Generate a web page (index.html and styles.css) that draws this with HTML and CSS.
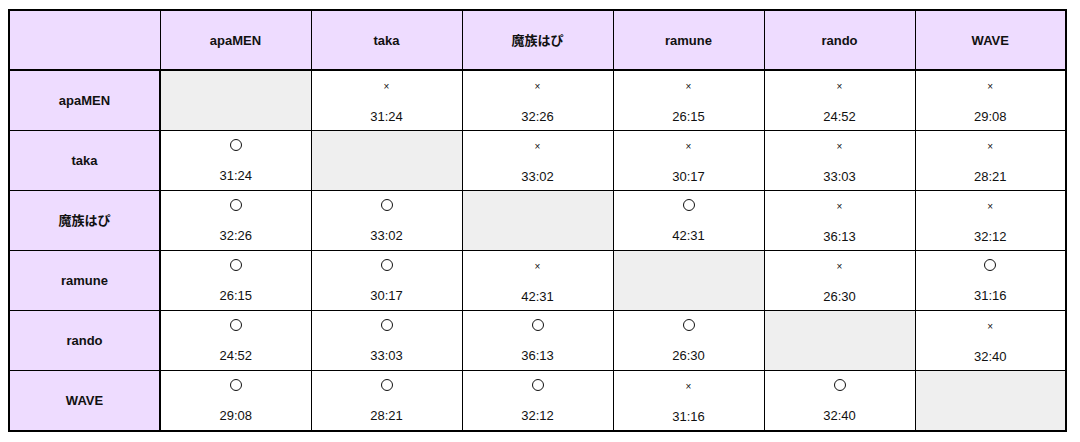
FILE: index.html
```html
<!DOCTYPE html>
<html lang="ja">
<head>
<meta charset="utf-8">
<link rel="stylesheet" href="styles.css">
</head>
<body>
<table class="league">
  <colgroup><col class="c-name"><col><col><col><col><col><col></colgroup>
  <thead>
    <tr><th class="corner"></th><th>apaMEN</th><th>taka</th><th>魔族はぴ</th><th>ramune</th><th>rando</th><th>WAVE</th></tr>
  </thead>
  <tbody>
    <tr><th>apaMEN</th><td class="self"></td><td><span class="x">×</span><br><br>31:24</td><td><span class="x">×</span><br><br>32:26</td><td><span class="x">×</span><br><br>26:15</td><td><span class="x">×</span><br><br>24:52</td><td><span class="x">×</span><br><br>29:08</td></tr>
    <tr><th>taka</th><td><span class="o"></span><br><br>31:24</td><td class="self"></td><td><span class="x">×</span><br><br>33:02</td><td><span class="x">×</span><br><br>30:17</td><td><span class="x">×</span><br><br>33:03</td><td><span class="x">×</span><br><br>28:21</td></tr>
    <tr><th>魔族はぴ</th><td><span class="o"></span><br><br>32:26</td><td><span class="o"></span><br><br>33:02</td><td class="self"></td><td><span class="o"></span><br><br>42:31</td><td><span class="x">×</span><br><br>36:13</td><td><span class="x">×</span><br><br>32:12</td></tr>
    <tr><th>ramune</th><td><span class="o"></span><br><br>26:15</td><td><span class="o"></span><br><br>30:17</td><td><span class="x">×</span><br><br>42:31</td><td class="self"></td><td><span class="x">×</span><br><br>26:30</td><td><span class="o"></span><br><br>31:16</td></tr>
    <tr><th>rando</th><td><span class="o"></span><br><br>24:52</td><td><span class="o"></span><br><br>33:03</td><td><span class="o"></span><br><br>36:13</td><td><span class="o"></span><br><br>26:30</td><td class="self"></td><td><span class="x">×</span><br><br>32:40</td></tr>
    <tr><th>WAVE</th><td><span class="o"></span><br><br>29:08</td><td><span class="o"></span><br><br>28:21</td><td><span class="o"></span><br><br>32:12</td><td><span class="x">×</span><br><br>31:16</td><td><span class="o"></span><br><br>32:40</td><td class="self"></td></tr>
  </tbody>
</table>
</body>
</html>
```
FILE: styles.css
```css
html, body { background: #fff; }
body {
  margin: 9px 0 0 8px;
  font-family: "Liberation Sans", Arial, "Noto Sans CJK JP", sans-serif;
  font-size: 13px;
  color: #111;
}
.league {
  border-collapse: collapse;
  table-layout: fixed;
  width: 1058px;
  border: 2px solid #000;
}
.league col { width: 151px; }
.league th, .league td {
  border: 1px solid #000;
  text-align: center;
  vertical-align: middle;
  padding: 0;
  line-height: 15px;
}
.league th {
  background: #eedcff;
  font-weight: bold;
  height: 59px;
}
.league thead th { height: 58px; border-bottom: 2px solid #000; }
.league tbody th { border-right: 2px solid #000; }
.league thead th.corner { border-right: 1px solid #000; }
.league td { background: #fff; height: 59px; }
.league td.self { background: #efefef; }
.x { font-size: 10px; }
.o {
  display: inline-block;
  width: 10px;
  height: 10px;
  border: 1px solid #111;
  border-radius: 50%;
  vertical-align: -1px;
}
```
